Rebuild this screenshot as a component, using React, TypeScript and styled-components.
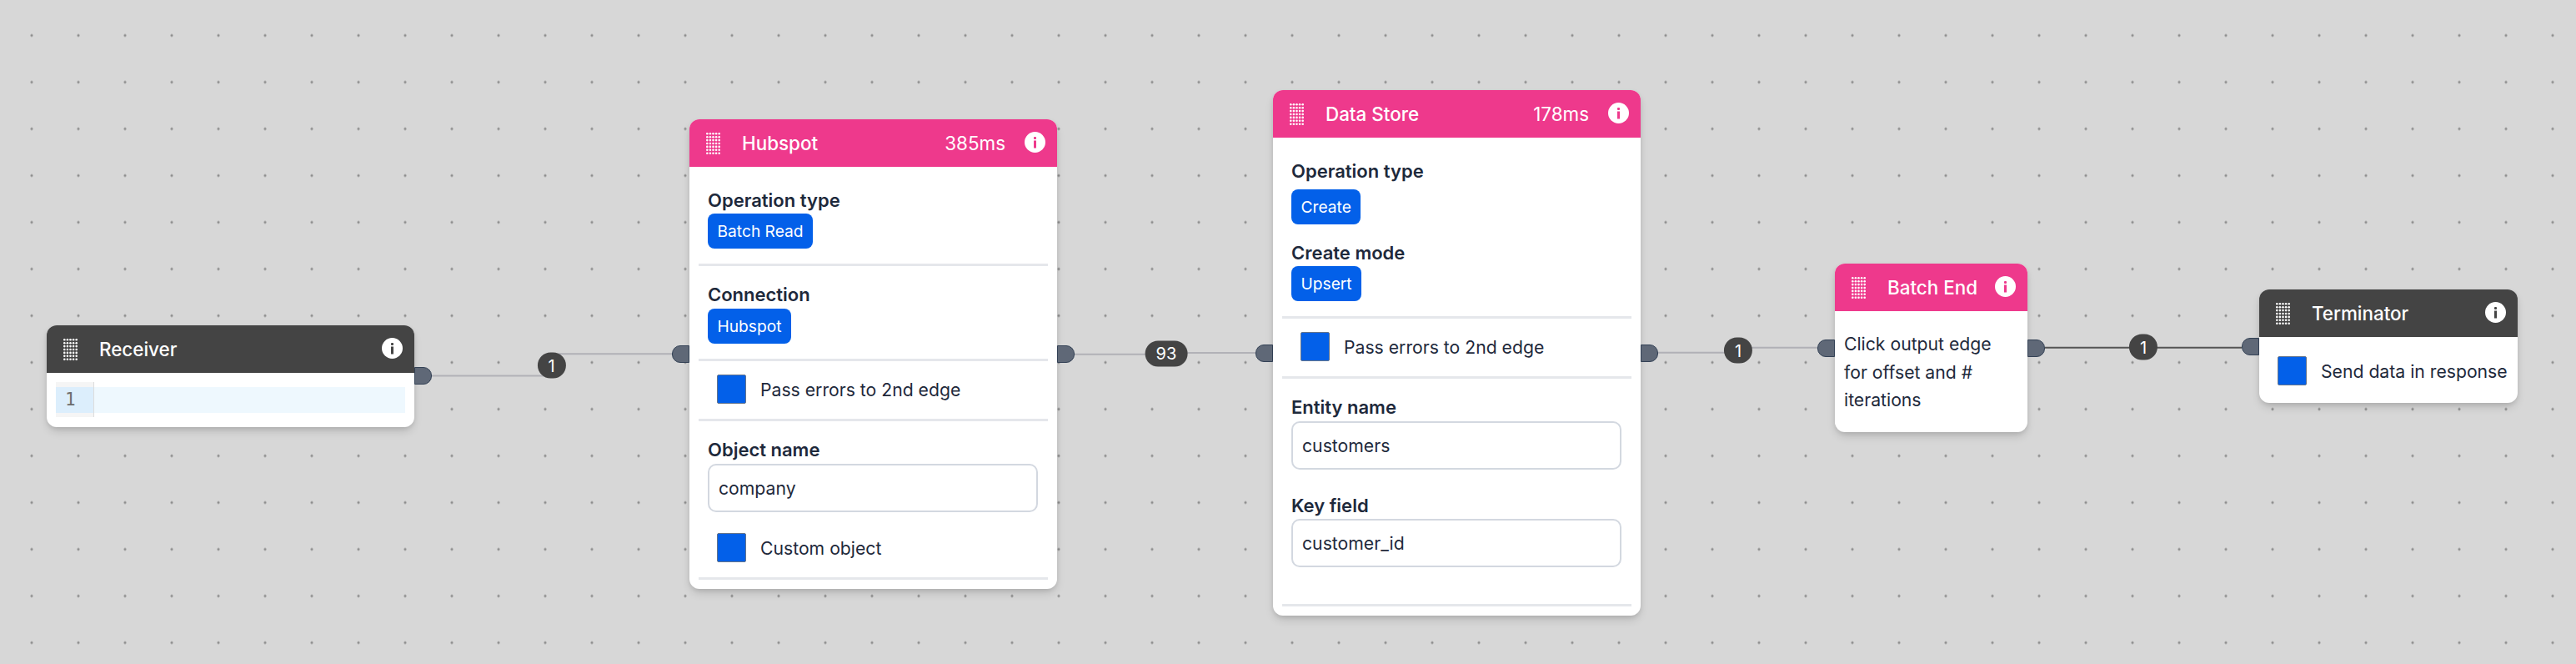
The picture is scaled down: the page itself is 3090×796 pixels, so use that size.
import React from "react";
import styled, { createGlobalStyle } from "styled-components";

const GlobalStyle = createGlobalStyle`
  html, body {
    margin: 0;
    padding: 0;
    height: 100%;
    background: #d7d7d7;
    font-family: Inter, "Liberation Sans", sans-serif;
  }
  * { box-sizing: border-box; }
`;

const Canvas = styled.div`
  position: relative;
  width: 3090px;
  height: 796px;
  overflow: hidden;
  background-color: #d7d7d7;
  background-image: radial-gradient(circle, #8e8e8e 1px, transparent 2px);
  background-size: 56px 56px;
  background-position: 10px 14.5px;
`;

const EdgeLayer = styled.svg`
  position: absolute;
  inset: 0;
`;

const NodeCard = styled.div<{ $x: number; $y: number; $w: number; $h: number }>`
  position: absolute;
  left: ${(p) => p.$x}px;
  top: ${(p) => p.$y}px;
  width: ${(p) => p.$w}px;
  height: ${(p) => p.$h}px;
  background: #fff;
  border-radius: 12px;
  box-shadow: 0 6px 12px -2px rgba(0, 0, 0, 0.16), 0 2px 5px rgba(0, 0, 0, 0.08);
  color: #1e293b;
`;

const Header = styled.div<{ $tone: "pink" | "dark" }>`
  display: flex;
  align-items: center;
  height: 57px;
  padding: 0 14px 0 20px;
  border-radius: 12px 12px 0 0;
  background: ${(p) => (p.$tone === "pink" ? "#ee398c" : "#444444")};
  color: #fff;
`;

const Title = styled.div`
  margin-left: 26px;
  font-size: 22.4px;
  font-weight: 500;
  flex: 1;
  white-space: nowrap;
`;

const Timing = styled.div`
  font-size: 22.4px;
  font-weight: 400;
  margin-right: 23px;
`;

const Body = styled.div`
  padding: 0 11px;
`;

const Section = styled.div<{ $pt: number; $pb: number }>`
  padding: ${(p) => p.$pt}px 0 ${(p) => p.$pb}px 11px;
  border-bottom: 3px solid #e5e7eb;
`;

const Label = styled.div<{ $mt?: number }>`
  margin-top: ${(p) => p.$mt ?? 0}px;
  font-size: 22px;
  line-height: 30px;
  font-weight: 600;
  color: #1e293b;
`;

const Pill = styled.div<{ $mt?: number }>`
  display: flex;
  width: fit-content;
  align-items: center;
  height: 42px;
  padding: 0 11.5px;
  margin-top: ${(p) => p.$mt ?? 1}px;
  border-radius: 8px;
  background: #0360e9;
  color: #fff;
  font-size: 19.2px;
`;

const CheckRow = styled.div<{ $mt?: number; $pl?: number }>`
  display: flex;
  align-items: center;
  gap: 17px;
  margin-top: ${(p) => p.$mt ?? 0}px;
  padding-left: ${(p) => p.$pl ?? 11}px;
  font-size: 21.2px;
  color: #1e293b;
  white-space: nowrap;
`;

const Box = styled.div`
  width: 35px;
  height: 35px;
  flex: none;
  background: #0360e9;
  border: 1px solid #64748b;
  border-radius: 2px;
`;

const TextField = styled.div<{ $mt: number }>`
  display: flex;
  align-items: center;
  width: 396px;
  height: 58px;
  margin-top: ${(p) => p.$mt}px;
  padding: 0 11px;
  background: #fff;
  border: 2px solid #d3d8e0;
  border-radius: 10px;
  font-size: 21.2px;
  color: #1e293b;
`;

const Editor = styled.div`
  display: flex;
  align-items: center;
  height: 42px;
  margin: 11px 11px 0;
`;

const Gutter = styled.div`
  display: flex;
  align-items: center;
  width: 46px;
  height: 42px;
  flex: none;
  background: linear-gradient(#f5f5f5 6px, #dceefc 6px, #dceefc 37px, #f5f5f5 37px);
  border-right: 1px solid #dddddd;
  font-family: "DejaVu Sans Mono", "Liberation Mono", monospace;
  font-size: 21px;
  color: #6c6c6c;
  padding-left: 11px;
`;

const ActiveLine = styled.div`
  flex: 1;
  height: 31px;
  background: #eef8fe;
`;

const Note = styled.div`
  padding: 23px 20px 0 11px;
  font-size: 21.2px;
  line-height: 33.5px;
  color: #1e293b;
`;

const TerminatorBody = styled.div`
  padding: 23px 0 0 11px;
`;

const Handle = styled.div<{ $side: "left" | "right"; $top: number }>`
  position: absolute;
  top: ${(p) => p.$top}px;
  ${(p) => (p.$side === "left" ? "right: 100%;" : "left: 100%;")}
  width: 21px;
  height: 21px;
  background: #5f6877;
  border: 1px solid #334155;
  border-radius: ${(p) => (p.$side === "left" ? "10px 0 0 10px" : "0 10px 10px 0")};
`;

const Badge = styled.div<{ $x: number; $y: number }>`
  position: absolute;
  left: ${(p) => p.$x}px;
  top: ${(p) => p.$y}px;
  transform: translate(-50%, -50%);
  display: flex;
  align-items: center;
  justify-content: center;
  min-width: 34px;
  height: 31px;
  padding: 0 13px;
  border-radius: 16px;
  background: #444444;
  color: #fff;
  font-size: 20px;
`;

const GripSvg = styled.svg`
  flex: none;
`;

const InfoSvg = styled.svg`
  flex: none;
  margin-top: -2px;
`;

const GripIcon = () => {
  const dots = [];
  for (let r = 0; r < 7; r++) {
    for (let c = 0; c < 5; c++) {
      dots.push(<circle key={`${r}-${c}`} cx={1.3 + c * 3.6} cy={1.3 + r * 3.9} r="1.3" fill="#fff" />);
    }
  }
  return (
    <GripSvg width="17" height="26" viewBox="0 0 17 26">
      {dots}
    </GripSvg>
  );
};

const InfoIcon = ({ tone }: { tone: string }) => (
  <InfoSvg width="25" height="25" viewBox="0 0 25 25">
    <circle cx="12.5" cy="12.5" r="12.5" fill="#fff" />
    <rect x="11" y="6" width="3" height="3" rx="1" fill={tone} />
    <rect x="11" y="10.5" width="3" height="9" fill={tone} />
  </InfoSvg>
);

const NodeHeader = ({ tone, title, ms }: { tone: "pink" | "dark"; title: string; ms?: string }) => (
  <Header $tone={tone}>
    <GripIcon />
    <Title>{title}</Title>
    {ms && <Timing>{ms}</Timing>}
    <InfoIcon tone={tone === "pink" ? "#ee398c" : "#444444"} />
  </Header>
);

export default function App() {
  return (
    <Canvas>
      <GlobalStyle />
      <EdgeLayer width="3090" height="796" fill="none">
        <path d="M518 450.5H661V424.3H808" stroke="#b1b1b7" strokeWidth="2" />
        <path d="M1289 424.7H1399V423H1506" stroke="#b1b1b7" strokeWidth="2" />
        <path d="M1989 422.7H2085V416.7H2180" stroke="#b1b1b7" strokeWidth="2" />
        <path d="M2453 416.7H2689" stroke="#555555" strokeWidth="2" />
      </EdgeLayer>

      <NodeCard $x={56} $y={390} $w={441} $h={122}>
        <NodeHeader tone="dark" title="Receiver" />
        <Editor>
          <Gutter>1</Gutter>
          <ActiveLine />
        </Editor>
        <Handle $side="right" $top={50} />
      </NodeCard>

      <NodeCard $x={827} $y={143} $w={441} $h={563}>
        <NodeHeader tone="pink" title="Hubspot" ms="385ms" />
        <Body>
          <Section $pt={25} $pb={18}>
            <Label>Operation type</Label>
            <Pill>Batch Read</Pill>
          </Section>
          <Section $pt={19} $pb={18}>
            <Label>Connection</Label>
            <Pill $mt={2}>Hubspot</Pill>
          </Section>
          <Section $pt={16} $pb={18}>
            <CheckRow>
              <Box />
              Pass errors to 2nd edge
            </CheckRow>
          </Section>
          <Section $pt={19} $pb={18}>
            <Label>Object name</Label>
            <TextField $mt={2}>company</TextField>
            <CheckRow $mt={25}>
              <Box />
              Custom object
            </CheckRow>
          </Section>
        </Body>
        <Handle $side="left" $top={271} />
        <Handle $side="right" $top={271} />
      </NodeCard>

      <NodeCard $x={1527} $y={108} $w={441} $h={630}>
        <NodeHeader tone="pink" title="Data Store" ms="178ms" />
        <Body>
          <Section $pt={25} $pb={18}>
            <Label>Operation type</Label>
            <Pill $mt={7}>Create</Pill>
            <Label $mt={19}>Create mode</Label>
            <Pill>Upsert</Pill>
          </Section>
          <Section $pt={16} $pb={18}>
            <CheckRow>
              <Box />
              Pass errors to 2nd edge
            </CheckRow>
          </Section>
          <Section $pt={19} $pb={44}>
            <Label>Entity name</Label>
            <TextField $mt={2}>customers</TextField>
            <Label $mt={28}>Key field</Label>
            <TextField $mt={1}>customer_id</TextField>
          </Section>
        </Body>
        <Handle $side="left" $top={305} />
        <Handle $side="right" $top={305} />
      </NodeCard>

      <NodeCard $x={2201} $y={316} $w={231} $h={202}>
        <NodeHeader tone="pink" title="Batch End" />
        <Note>Click output edge for offset and # iterations</Note>
        <Handle $side="left" $top={91} />
        <Handle $side="right" $top={91} />
      </NodeCard>

      <NodeCard $x={2710} $y={347} $w={310} $h={136}>
        <NodeHeader tone="dark" title="Terminator" />
        <TerminatorBody>
          <CheckRow>
            <Box />
            Send data in response
          </CheckRow>
        </TerminatorBody>
        <Handle $side="left" $top={58} />
      </NodeCard>

      <Badge $x={661.5} $y={438}>1</Badge>
      <Badge $x={1399} $y={423.5}>93</Badge>
      <Badge $x={2085} $y={420}>1</Badge>
      <Badge $x={2571} $y={416}>1</Badge>
    </Canvas>
  );
}
